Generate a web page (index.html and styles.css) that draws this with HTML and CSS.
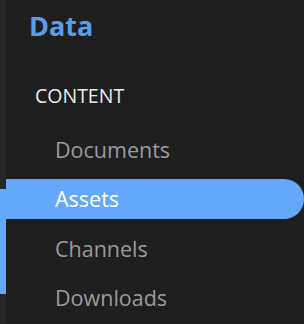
FILE: index.html
```html
<!DOCTYPE html>
<html lang="en">
<head>
  <meta charset="UTF-8" />
  <meta name="viewport" content="width=device-width, initial-scale=1" />
  <title>Data</title>
  <link rel="stylesheet" href="styles.css">
</head>
<body>
  <div class="layout">
    <div class="rail">
      <div class="rail-thumb"></div>
    </div>
    <nav class="sidebar">
      <h1 class="brand">Data</h1>
      <div class="section">CONTENT</div>
      <ul class="menu">
        <li><a href="#">Documents</a></li>
        <li class="active"><a href="#">Assets</a></li>
        <li><a href="#">Channels</a></li>
        <li><a href="#">Downloads</a></li>
      </ul>
    </nav>
  </div>
</body>
</html>
```

FILE: styles.css
```css
body {
  margin: 0;
  background: #1e1e1e;
  font-family: 'Open Sans', sans-serif;
  color: #fff;
  overflow: hidden;
}
.layout {
  display: flex;
  height: 324px;
}
.rail {
  width: 6px;
  flex-shrink: 0;
  background: #262626;
  padding-top: 189px;
  box-sizing: border-box;
}
.rail-thumb {
  height: 105px;
  background: #64a8f9;
}
.sidebar {
  flex: 1;
}
.brand {
  margin: 0;
  padding: 8px 0 0 23px;
  font-size: 27px;
  font-weight: 700;
  line-height: 36px;
  color: #5b9ee8;
}
.section {
  margin-top: 39px;
  padding-left: 29px;
  font-size: 19.5px;
  line-height: 26px;
  color: #ececec;
}
.menu {
  list-style: none;
  margin: 20px 0 0;
  padding: 0;
  display: flex;
  flex-direction: column;
  gap: 9.5px;
}
.menu li {
  height: 40px;
  display: flex;
  align-items: center;
  border-radius: 0 20px 20px 0;
}
.menu a {
  padding-left: 49px;
  font-size: 21.5px;
  color: #9b9b9b;
  text-decoration: none;
}
.menu .active {
  background: #64a8f9;
}
.menu .active a {
  color: #fff;
}
```
